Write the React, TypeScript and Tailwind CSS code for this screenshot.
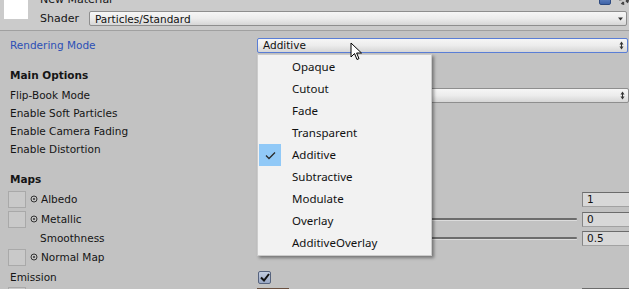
import React from "react";

const unityFont = { fontFamily: '"DejaVu Sans", Verdana, sans-serif' };

function UpDown() {
  return (
    <svg width="5" height="9" viewBox="0 0 5 9" className="shrink-0">
      <path d="M2.5 0.5 L4.5 3.5 L0.5 3.5 Z" fill="#333" />
      <path d="M2.5 8.5 L4.5 5.5 L0.5 5.5 Z" fill="#333" />
      <rect x="2" y="3" width="1" height="3" fill="#333" />
    </svg>
  );
}

function DownArrow() {
  return (
    <svg width="5" height="4" viewBox="0 0 5 4" className="shrink-0">
      <path d="M0 0.5 L5 0.5 L2.5 3.5 Z" fill="#333" />
    </svg>
  );
}

function Dropdown({ value, focused, arrow = "updown" }: { value?: string; focused?: boolean; arrow?: "updown" | "down" }) {
  return (
    <div
      className={`h-[15px] flex-1 flex items-center justify-between pl-[5px] pr-[3px] rounded-[2px] border bg-gradient-to-b from-[#f6f6f6] via-[#ececec] to-[#d6d6d6] text-[10.5px] text-[#111] ${
        focused ? "border-[#5a7ed6]" : "border-[#8e8e8e]"
      }`}
    >
      <span className="leading-none pt-[1px]">{value}</span>
      {arrow === "updown" ? <UpDown /> : <DownArrow />}
    </div>
  );
}

function Field({ value }: { value: string }) {
  return (
    <div className="ml-[5px] w-[51px] h-[15px] shrink-0 bg-[#d8d8d8] border border-[#a2a2a2] border-t-[#6c6c6c] border-l-[#858585] pl-[4px] flex items-center text-[10.5px] text-[#111] leading-none">
      {value}
    </div>
  );
}

function Slider({ value }: { value: string }) {
  return (
    <div className="flex items-center w-full">
      <div className="flex-1 ml-[2px] flex flex-col">
        <div className="h-[2px] rounded-full bg-[#6c6c6c]" />
        <div className="h-[1px] rounded-full bg-[#dcdcdc]" />
      </div>
      <Field value={value} />
    </div>
  );
}

function TexBox() {
  return <div className="ml-[8px] w-[18px] h-[17px] shrink-0 bg-[#c9c9c9] border border-[#a9a9a9]" />;
}

function Dot() {
  return (
    <svg width="8" height="8" viewBox="0 0 8 8" className="ml-[4px] mr-[3px] shrink-0">
      <circle cx="4" cy="4" r="3" fill="none" stroke="#333" strokeWidth="1" />
      <circle cx="4" cy="4" r="1" fill="#333" />
    </svg>
  );
}

function Label({ children, className = "" }: { children: React.ReactNode; className?: string }) {
  return <span className={`pt-[2px] ${className}`}>{children}</span>;
}

function Row({ h, children, right, className = "" }: { h: string; children?: React.ReactNode; right?: React.ReactNode; className?: string }) {
  return (
    <div className={`flex items-center ${h} ${className}`}>
      <div className="w-[257px] shrink-0 flex items-center">{children}</div>
      <div className="w-[376px] shrink-0 flex items-center">{right}</div>
    </div>
  );
}

const menuItems = ["Opaque", "Cutout", "Fade", "Transparent", "Additive", "Subtractive", "Modulate", "Overlay", "AdditiveOverlay"];

export default function App() {
  return (
    <div className="relative w-[629px] h-[289px] overflow-hidden bg-[#c2c2c2] text-[#151515] text-[10.5px]" style={unityFont}>
      {/* Header */}
      <div className="h-[31px] bg-[#cbcbcb] border-b border-[#a0a0a0] flex">
        <div className="ml-[4px] w-[24px] h-[19px] bg-white shrink-0" />
        <div className="ml-[12px] flex-1 flex flex-col">
          <div className="-mt-[8px] h-[14px] flex items-start justify-between text-[11px]">
            <span>New Material</span>
            <div className="flex items-start gap-[8px] mt-[1px]">
              <div className="w-[12px] h-[12px] rounded-[2px] bg-gradient-to-b from-[#7d9cd0] to-[#3f63a8] border border-[#2d4a80]" />
              <div className="w-[10px] h-[10px] mt-[2px] rounded-full border-[3px] border-dotted border-[#444]" />
            </div>
          </div>
          <div className="mt-[5px] h-[15px] flex items-center">
            <span className="w-[49px] text-[11px] pt-[1px]">Shader</span>
            <div className="flex-1 flex mr-[2px]">
              <Dropdown value="Particles/Standard" arrow="down" />
            </div>
          </div>
        </div>
      </div>

      {/* Body */}
      <div className="pt-[5px]">
        <Row
          h="h-[18px]"
          right={
            <div className="flex-1 flex mr-[5px]">
              <Dropdown value="Additive" focused />
            </div>
          }
        >
          <Label className="pl-[10px] text-[#2c50b6]">Rendering Mode</Label>
        </Row>
        <Row h="h-[18px]" className="mt-[12px]">
          <Label className="pl-[10px] font-bold">Main Options</Label>
        </Row>
        <Row
          h="h-[18px]"
          className="mt-[2px]"
          right={
            <div className="flex-1 flex mr-[4px]">
              <Dropdown value="" />
            </div>
          }
        >
          <Label className="pl-[10px]">Flip-Book Mode</Label>
        </Row>
        <Row h="h-[18px]">
          <Label className="pl-[10px]">Enable Soft Particles</Label>
        </Row>
        <Row h="h-[18px]">
          <Label className="pl-[10px]">Enable Camera Fading</Label>
        </Row>
        <Row h="h-[18px]">
          <Label className="pl-[10px]">Enable Distortion</Label>
        </Row>
        <Row h="h-[18px]" className="mt-[12px]">
          <Label className="pl-[10px] font-bold">Maps</Label>
        </Row>
        <Row
          h="h-[20px]"
          className="mt-[1px]"
          right={
            <div className="flex-1 flex justify-end">
              <Field value="1" />
            </div>
          }
        >
          <TexBox />
          <Dot />
          <Label>Albedo</Label>
        </Row>
        <Row h="h-[20px]" right={<Slider value="0" />}>
          <TexBox />
          <Dot />
          <Label>Metallic</Label>
        </Row>
        <Row h="h-[18px]" right={<Slider value="0.5" />}>
          <Label className="pl-[40px]">Smoothness</Label>
        </Row>
        <Row h="h-[20px]">
          <TexBox />
          <Dot />
          <Label>Normal Map</Label>
        </Row>
        <Row
          h="h-[20px]"
          right={
            <div className="ml-[1px] w-[13px] h-[13px] bg-gradient-to-b from-[#c3cde0] to-[#9aa8c4] border border-[#56637e] rounded-[2px] flex items-center justify-center">
              <svg width="10" height="9" viewBox="0 0 10 9">
                <path d="M1 4.5 L4 7.5 L9 1" fill="none" stroke="#111" strokeWidth="2" />
              </svg>
            </div>
          }
        >
          <Label className="pl-[10px]">Emission</Label>
        </Row>
        <Row
          h="h-[20px]"
          className="items-start"
          right={
            <div className="flex-1 flex items-start justify-between pt-[1px]">
              <div className="w-[32px] h-[10px] bg-gradient-to-r from-[#b07a5e] to-[#8b5a45] border-t border-[#6a5040]" />
              <div className="w-[51px] h-[10px] bg-[#d8d8d8] border-t border-[#6c6c6c]" />
            </div>
          }
        >
          <div className="ml-[8px] w-[18px] h-[10px] bg-[#c9c9c9] border border-[#a9a9a9]" />
        </Row>
      </div>

      {/* Popup menu */}
      <div
        className="absolute left-[257px] top-[54px] w-[175px] bg-[#f2f2f2] border border-[#cccccc] shadow-[2px_2px_3px_rgba(0,0,0,0.4)] py-[1px] pl-[1px]"
        style={{ fontFamily: '"Noto Sans", "Open Sans", sans-serif' }}
      >
        {menuItems.map((item) => (
          <div key={item} className="h-[22px] flex items-center text-[11.5px] text-[#111]">
            <div className="w-[28px] h-[22px] shrink-0 flex items-center">
              {item === "Additive" && (
                <div className="w-[22px] h-[22px] bg-[#91c9f7] flex items-center justify-center">
                  <svg width="11" height="9" viewBox="0 0 11 9">
                    <path d="M1 4.5 L4 7.5 L10 1.5" fill="none" stroke="#2b2b2b" strokeWidth="1.3" />
                  </svg>
                </div>
              )}
            </div>
            <span className="pl-[5px]">{item}</span>
          </div>
        ))}
      </div>

      {/* Mouse cursor */}
      <svg className="absolute left-[350px] top-[42px]" width="13" height="19" viewBox="0 0 13 19">
        <path d="M1 1 L1 15 L4.5 11.5 L7 17.5 L9 16.6 L6.6 11 L11.5 11 Z" fill="#fff" stroke="#000" strokeWidth="1" strokeLinejoin="round" />
      </svg>
    </div>
  );
}
